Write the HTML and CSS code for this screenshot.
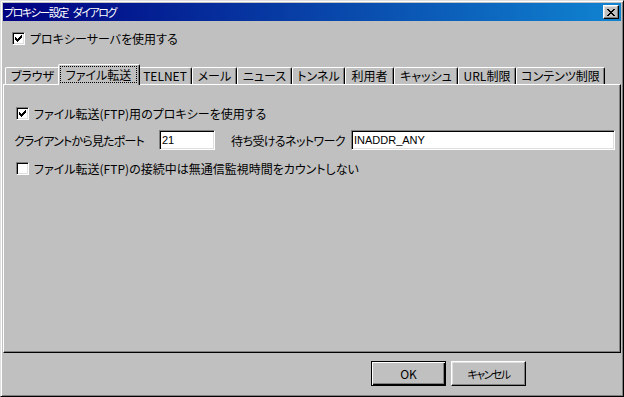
FILE: index.html
```html
<!DOCTYPE html>
<html lang="ja">
<head>
<meta charset="utf-8">
<title>プロキシー設定 ダイアログ</title>
<link rel="stylesheet" href="styles.css">
</head>
<body>
<div class="window">
  <div class="titlebar">
    <span class="title">プロキシー設定 ダイアログ</span>
    <span class="close">
      <svg width="8" height="7" viewBox="0 0 8 7" shape-rendering="crispEdges">
        <rect x="0" y="0" width="2" height="1"/><rect x="6" y="0" width="2" height="1"/>
        <rect x="1" y="1" width="2" height="1"/><rect x="5" y="1" width="2" height="1"/>
        <rect x="2" y="2" width="4" height="1"/>
        <rect x="3" y="3" width="2" height="1"/>
        <rect x="2" y="4" width="4" height="1"/>
        <rect x="1" y="5" width="2" height="1"/><rect x="5" y="5" width="2" height="1"/>
        <rect x="0" y="6" width="2" height="1"/><rect x="6" y="6" width="2" height="1"/>
      </svg>
    </span>
  </div>
  <div class="client">
    <div class="check top-check">
      <span class="box">
        <svg class="mark" width="7" height="7" viewBox="0 0 7 7" shape-rendering="crispEdges">
          <rect x="0" y="2" width="1" height="3"/><rect x="1" y="3" width="1" height="3"/>
          <rect x="2" y="4" width="1" height="3"/><rect x="3" y="3" width="1" height="3"/>
          <rect x="4" y="2" width="1" height="3"/><rect x="5" y="1" width="1" height="3"/>
          <rect x="6" y="0" width="1" height="3"/>
        </svg>
      </span>
      <span class="check-text">プロキシーサーバを使用する</span>
    </div>

    <div class="tabs">
      <div class="tabstrip">
        <div class="tab t-browser">ブラウザ</div>
        <div class="tab active t-ftp"><span class="focus">ファイル転送</span></div>
        <div class="tab t-telnet">TELNET</div>
        <div class="tab t-mail">メール</div>
        <div class="tab t-news">ニュース</div>
        <div class="tab t-tunnel">トンネル</div>
        <div class="tab t-user">利用者</div>
        <div class="tab t-cache">キャッシュ</div>
        <div class="tab t-url">URL制限</div>
        <div class="tab t-content">コンテンツ制限</div>
      </div>
      <div class="panel">
        <div class="check panel-check1">
          <span class="box">
            <svg class="mark" width="7" height="7" viewBox="0 0 7 7" shape-rendering="crispEdges">
              <rect x="0" y="2" width="1" height="3"/><rect x="1" y="3" width="1" height="3"/>
              <rect x="2" y="4" width="1" height="3"/><rect x="3" y="3" width="1" height="3"/>
              <rect x="4" y="2" width="1" height="3"/><rect x="5" y="1" width="1" height="3"/>
              <rect x="6" y="0" width="1" height="3"/>
            </svg>
          </span>
          <span class="check-text">ファイル転送(FTP)用のプロキシーを使用する</span>
        </div>
        <div class="field-row">
          <span class="lbl lbl1">クライアントから見たポート</span>
          <span class="field">21</span>
          <span class="lbl lbl2">待ち受けるネットワーク</span>
          <span class="field">INADDR_ANY</span>
        </div>
        <div class="check panel-check2">
          <span class="box"></span>
          <span class="check-text">ファイル転送(FTP)の接続中は無通信監視時間をカウントしない</span>
        </div>
      </div>
    </div>

    <div class="buttons">
      <span class="btn default">OK</span>
      <span class="btn btn-cancel">キャンセル</span>
    </div>
  </div>
</div>
</body>
</html>
```

FILE: styles.css
```css
html, body {
  margin: 0;
  padding: 0;
  background: #c0c0c0;
}

body {
  font-family: "Noto Sans CJK JP", "Noto Sans", sans-serif;
  font-size: 12px;
  font-feature-settings: "palt";
  color: #000;
}

.window {
  width: 624px;
  height: 397px;
  box-sizing: border-box;
  border: 1px solid;
  border-color: #dfdfdf #000 #000 #dfdfdf;
  box-shadow: inset 1px 1px #fff, inset -1px -1px #808080;
  padding: 2px;
  display: flex;
  flex-direction: column;
  background: #c0c0c0;
}

.titlebar {
  height: 18px;
  flex: none;
  display: flex;
  align-items: center;
  justify-content: space-between;
  padding: 0 2px 0 1px;
  background: linear-gradient(to right, #000080, #1084d0);
  color: #fff;
}

.title {
  font-size: 11px;
  line-height: 18px;
  letter-spacing: -1.5px;
  word-spacing: 4px;
}

.close {
  width: 16px;
  height: 14px;
  box-sizing: border-box;
  background: #c0c0c0;
  border: 1px solid;
  border-color: #fff #000 #000 #fff;
  box-shadow: inset -1px -1px #808080, inset 1px 1px #dfdfdf;
  display: flex;
  align-items: center;
  justify-content: center;
}

.close svg {
  fill: #000;
}

.client {
  flex: 1;
  display: flex;
  flex-direction: column;
}

.check {
  display: flex;
  align-items: center;
  height: 13px;
}

.box {
  width: 13px;
  height: 13px;
  box-sizing: border-box;
  flex: none;
  background: #fff;
  border: 1px solid;
  border-color: #808080 #fff #fff #808080;
  box-shadow: inset 1px 1px #000, inset -1px -1px #dfdfdf;
  display: flex;
  align-items: center;
  justify-content: center;
}

.mark {
  fill: #000;
}

.check-text {
  margin-left: 5px;
  line-height: 13px;
  white-space: nowrap;
}

.top-check {
  margin: 11px 0 0 9px;
}

.tabs {
  margin-top: 19px;
  display: flex;
  flex-direction: column;
}

.tabstrip {
  height: 20px;
  display: flex;
  align-items: flex-end;
  padding-left: 2px;
}

.tab {
  height: 17px;
  box-sizing: border-box;
  flex: none;
  border: 1px solid;
  border-bottom: none;
  border-color: #fff #000 transparent #fff;
  border-radius: 2px 2px 0 0;
  box-shadow: inset -1px 0 #808080;
  text-align: center;
  line-height: 16px;
  white-space: nowrap;
}

.tab.active {
  height: 21px;
  margin: 0 -2px -1px -2px;
  position: relative;
  z-index: 1;
  background: #c0c0c0;
  line-height: 17px;
  padding: 1px 2px 0 1px;
}

.focus {
  display: block;
  border: 1px dotted #000;
  line-height: 15px;
}

.t-browser { width: 55px; }
.t-ftp { width: 82px; }
.t-telnet { width: 54px; }
.t-mail { width: 45px; }
.t-news { width: 55px; }
.t-tunnel { width: 53px; }
.t-user { width: 49px; }
.t-cache { width: 64px; }
.t-url { width: 58px; }
.t-content { width: 89px; }

.panel {
  height: 269px;
  box-sizing: border-box;
  border: 1px solid;
  border-color: #fff #000 #000 #fff;
  box-shadow: inset -1px -1px #808080;
  padding: 0 5px 0 10px;
  display: flex;
  flex-direction: column;
}

.panel-check1 {
  margin: 22px 0 0 2px;
}

.field-row {
  margin-top: 10px;
  display: grid;
  grid-template-columns: 145px 56px 1fr 264px;
  align-items: center;
  height: 20px;
}

.lbl {
  white-space: nowrap;
  line-height: 13px;
}

.lbl1 {
  letter-spacing: -0.8px;
}

.lbl2 {
  padding-left: 16px;
  letter-spacing: -0.6px;
}

.field {
  height: 20px;
  box-sizing: border-box;
  background: #fff;
  border: 1px solid;
  border-color: #808080 #fff #fff #808080;
  box-shadow: inset 1px 1px #000, inset -1px -1px #dfdfdf;
  padding: 0 2px;
  font-family: "Liberation Sans", sans-serif;
  font-size: 11px;
  line-height: 18px;
}

.panel-check2 {
  margin: 12px 0 0 2px;
}

.buttons {
  display: flex;
  justify-content: flex-end;
  gap: 5px;
  padding: 8px 95px 0 0;
}

.btn {
  width: 75px;
  height: 25px;
  box-sizing: border-box;
  border: 1px solid;
  border-color: #fff #000 #000 #fff;
  box-shadow: inset -1px -1px #808080, inset 1px 1px #dfdfdf;
  display: flex;
  align-items: center;
  justify-content: center;
}

.btn-cancel {
  font-size: 11px;
  letter-spacing: -1.5px;
}

.btn.default {
  border-color: #000;
  box-shadow: inset 1px 1px #fff, inset -1px -1px #000, inset -2px -2px #808080;
}
```
